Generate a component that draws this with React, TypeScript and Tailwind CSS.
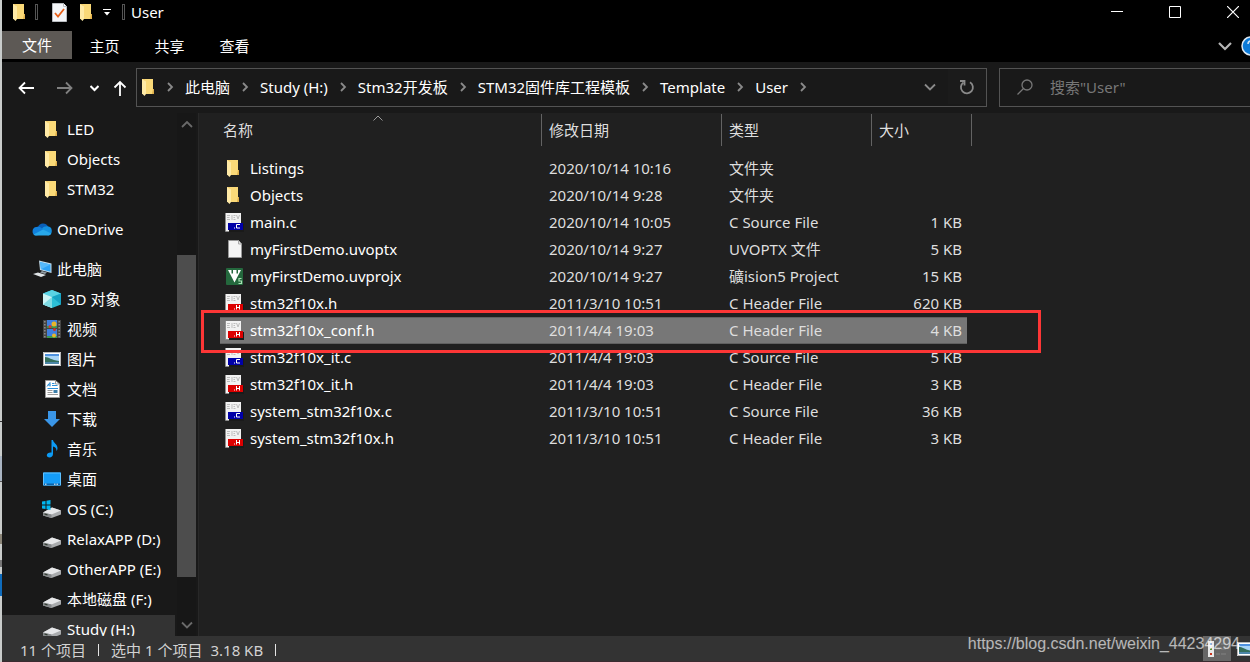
import { Fragment, type ReactNode } from 'react'
import { clsx } from 'clsx'

type FileKind = 'folder' | 'c' | 'h' | 'blank' | 'uvision'

interface FileEntry {
  name: string
  date: string
  type: string
  size: string
  kind: FileKind
  selected?: boolean
}

const FILES: FileEntry[] = [
  { name: 'Listings', date: '2020/10/14 10:16', type: '文件夹', size: '', kind: 'folder' },
  { name: 'Objects', date: '2020/10/14 9:28', type: '文件夹', size: '', kind: 'folder' },
  { name: 'main.c', date: '2020/10/14 10:05', type: 'C Source File', size: '1 KB', kind: 'c' },
  { name: 'myFirstDemo.uvoptx', date: '2020/10/14 9:27', type: 'UVOPTX 文件', size: '5 KB', kind: 'blank' },
  { name: 'myFirstDemo.uvprojx', date: '2020/10/14 9:27', type: '礦ision5 Project', size: '15 KB', kind: 'uvision' },
  { name: 'stm32f10x.h', date: '2011/3/10 10:51', type: 'C Header File', size: '620 KB', kind: 'h' },
  { name: 'stm32f10x_conf.h', date: '2011/4/4 19:03', type: 'C Header File', size: '4 KB', kind: 'h', selected: true },
  { name: 'stm32f10x_it.c', date: '2011/4/4 19:03', type: 'C Source File', size: '5 KB', kind: 'c' },
  { name: 'stm32f10x_it.h', date: '2011/4/4 19:03', type: 'C Header File', size: '3 KB', kind: 'h' },
  { name: 'system_stm32f10x.c', date: '2011/3/10 10:51', type: 'C Source File', size: '36 KB', kind: 'c' },
  { name: 'system_stm32f10x.h', date: '2011/3/10 10:51', type: 'C Header File', size: '3 KB', kind: 'h' },
]

const CRUMBS = ['此电脑', 'Study (H:)', 'Stm32开发板', 'STM32固件库工程模板', 'Template', 'User']

function FolderIcon() {
  return (
    <svg width="14" height="18" viewBox="0 0 14 18" className="shrink-0" aria-hidden="true">
      <path d="M1 1h11v10h1v5H4L1 15z" fill="#f5cf6b" />
      <path d="M4 1h8v10h1v5H4z" fill="#fad978" />
      <path d="M12 11h1v5h-2z" fill="#e0b04c" />
      <path d="M1 1l4 2.500V16l-1.500 2L1 15.500z" fill="#ffeaa6" />
    </svg>
  )
}

function CheckDocIcon() {
  return (
    <svg width="15" height="19" viewBox="0 0 15 19" aria-hidden="true">
      <path d="M.5.5h11l3 3v15H.5z" fill="#f4f6f9" stroke="#b9bcc0" />
      <path d="M11.500.5v3h3" fill="#fff" stroke="#b9bcc0" />
      <path d="M3 10l3 3.500 6-7.500" fill="none" stroke="#e8611a" strokeWidth="1.800" />
    </svg>
  )
}

function SourceIcon({ letter }: { letter: 'C' | 'H' }) {
  const fill = letter === 'C' ? '#0000a8' : '#dc0000'
  return (
    <svg width="20" height="20" viewBox="0 0 20 20" className="shrink-0" aria-hidden="true">
      <path d="M0 1h16v18H0z" fill="#f2f2f2" />
      <path d="M.5 1v18.500H16" fill="none" stroke="#8e8e8e" />
      <path d="M2 3.500h3M2 5.500h2.500M2 7.500h3M7 3v5M8.500 3.500h2M8.500 5.500h1.500M8.500 7.500h2M11.500 3l1.500 4 1.500-4" fill="none" stroke="#bdbdbd" />
      <path d="M4 12h15v8H4z" fill="#1a1a1a" />
      <path d="M3 11h15v7H3z" fill={fill} />
      <path d="M9 16h1" stroke="#fff" />
      {letter === 'C' ? (
        <path d="M15 12.500h-3.500v3.500H15" fill="none" stroke="#fff" />
      ) : (
        <path d="M11.500 12v4.500M14.500 12v4.500M11.500 14.500h3" fill="none" stroke="#fff" />
      )}
    </svg>
  )
}

function BlankDocIcon() {
  return (
    <svg width="20" height="20" viewBox="0 0 20 20" className="shrink-0" aria-hidden="true">
      <path d="M3.500 1.500h10l3 3.500v13.500h-13z" fill="#f5f5f5" stroke="#999" />
      <path d="M13.500 1.500V5h3" fill="#e3e3e3" stroke="#aaa" />
    </svg>
  )
}

function UvisionIcon() {
  return (
    <svg width="20" height="20" viewBox="0 0 20 20" className="shrink-0" aria-hidden="true">
      <rect x="1" y="2" width="17" height="17" rx="1" fill="#24683d" />
      <path d="M3 4h3.500v3.500h1.500V4h3.500v3.500H13V4h3L9.500 16.500z" fill="#fff" />
      <path d="M16.500 12.500H14V15h2.500v2.500h-3" fill="none" stroke="#a9e0b4" strokeWidth="1.200" />
    </svg>
  )
}

function FileIcon({ kind }: { kind: FileKind }) {
  if (kind === 'folder') return <span className="flex w-5 justify-center pr-1"><FolderIcon /></span>
  if (kind === 'c') return <SourceIcon letter="C" />
  if (kind === 'h') return <SourceIcon letter="H" />
  if (kind === 'uvision') return <UvisionIcon />
  return <BlankDocIcon />
}

function Svg20({ children }: { children: ReactNode }) {
  return (
    <svg width="20" height="20" viewBox="0 0 20 20" className="shrink-0" aria-hidden="true">
      {children}
    </svg>
  )
}

function DriveIcon({ system }: { system?: boolean }) {
  return (
    <Svg20>
      <path d="M1 13.500L10 8.500l9 3v4L9.500 19 1 16.500z" fill="#a9abad" />
      <path d="M1 13.500L10 8.500l9 3-9.500 4z" fill="#e6e7e9" />
      <path d="M1 13.500l8.500 2V19L1 16.500z" fill="#85888a" />
      <path d="M2.500 15l3 .8" stroke="#2f3a2f" strokeWidth="1.200" />
      {system && (
        <path d="M0 2.500l3.500-.5v3.500H0zM4.500 1.800L8.500 1v4.500h-4zM0 6.500h3.500V10L0 9.500zM4.500 6.500h4V11l-4-.8z" fill="#00b7f0" />
      )}
    </Svg20>
  )
}

const oneDriveIcon = (
  <Svg20>
    <path d="M6 8a5.500 5.500 0 0 1 10-.5L10 13z" fill="#0a5fb8" />
    <path d="M4 16.500A4.300 4.300 0 0 1 4.500 8c2-.8 4-.2 5.500 1.500l6 5z" fill="#1180dc" />
    <path d="M15.500 7.200A4.700 4.700 0 0 1 16 16.500l-6-7c1.200-1.800 3.300-2.500 5.500-2.300z" fill="#1490df" />
    <path d="M1.500 15.500L11 10.500l8.300 4c-.5 1.200-1.800 2-3.300 2H4c-1 0-2-.4-2.500-1z" fill="#28a8ea" />
  </Svg20>
)

const computerIcon = (
  <Svg20>
    <path d="M7 1.500l12.500 3v9.500L8 11z" fill="#c4dceb" />
    <path d="M8 3l10.500 2.500v7.300L9 10.300z" fill="#2ea3f7" />
    <path d="M8 3l10.500 2.500L9 10.300z" fill="#55b9fb" />
    <path d="M10 12l5 1.500-2 1.500-5-1.500z" fill="#8f9aa2" />
    <path d="M1 15l5-1.500 8 2.500-5 2z" fill="#dfe3e6" />
  </Svg20>
)

const objectsIcon = (
  <Svg20>
    <path d="M10 1l9 3.500v11L10 19l-9-3.500v-11z" fill="#2cbfd6" />
    <path d="M10 1l9 3.500L10 8 1 4.500z" fill="#59d3e4" />
    <path d="M1 4.500L10 8v11l-9-3.500z" fill="#cdf4f5" />
    <path d="M1 15.500L10 8v11z" fill="#7fdbe4" />
    <path d="M10 8l9-3.500v11z" fill="#16a3c4" />
  </Svg20>
)

const videoIcon = (
  <Svg20>
    <path d="M1 1h18v18H1z" fill="#454545" />
    <path d="M5 1h10v8H5zM5 10h10v9H5z" fill="#3f7fe0" />
    <path d="M2.800 2v17M17.200 2v17" stroke="#8a8a8a" strokeWidth="1.600" strokeDasharray="1.500 1.500" />
    <path d="M5 7h10v2H5zM5 17h10v2H5z" fill="#3b9650" />
    <circle cx="12" cy="5" r="2.500" fill="#e8b62a" />
    <circle cx="8" cy="7.500" r="1.500" fill="#d83a2e" />
    <circle cx="12.500" cy="10.500" r="1.500" fill="#c2322a" />
    <circle cx="12" cy="16.500" r="2" fill="#e8b62a" />
  </Svg20>
)

function PictureIcon() {
  return (
    <Svg20>
      <path d="M1 3h18v14H1z" fill="#fff" />
      <path d="M1.500 3.500h17v13h-17z" fill="none" stroke="#b8b8b8" />
      <path d="M3 5h14v10H3z" fill="#a9d5f7" />
      <path d="M3 5h14v2H3z" fill="#4f92e0" />
      <path d="M3 8c4 0 6 3 14 4v3H3z" fill="#356f5c" />
      <path d="M3 13h14v2H3z" fill="#4c86a8" />
    </Svg20>
  )
}

const documentIcon = (
  <Svg20>
    <path d="M3.500 1.500h10l4 3.500v13.500h-14z" fill="#fff" stroke="#9a9a9a" />
    <path d="M13.500 1.500V5h4" fill="none" stroke="#9a9a9a" />
    <path d="M5 7.500l3-4v4M5.500 6h3" fill="none" stroke="#2b8fd8" />
    <path d="M10 4.500h2.500M10 6.500h5.500M5.500 9.500H16" stroke="#2b8fd8" />
    <path d="M5.500 11.500h5M5.500 13.500h5M5.500 15.500h10.500" stroke="#999" />
    <path d="M11.500 11h4v3h-4z" fill="#3c7faa" />
  </Svg20>
)

const downloadIcon = (
  <Svg20>
    <path d="M6 2h8v8h4l-8 8-8-8h4z" fill="#3a96e8" />
  </Svg20>
)

const musicIcon = (
  <Svg20>
    <path d="M9.500 1h1.500c.3 3 4.500 4 4.500 8 0 1.500-.5 2.500-1 3 0-3-1.500-4-3.500-4.500V15c0 2.200-1.600 3.500-3.500 3.500-1.600 0-2.700-.9-2.700-2.200 0-1.900 2.200-3.300 4.700-2.800z" fill="#0c9bf5" />
  </Svg20>
)

const desktopIcon = (
  <Svg20>
    <path d="M1 3.500h18v13H1z" fill="#149cf8" />
    <path d="M1.500 4h17v12h-17z" fill="none" stroke="#5fc0ff" />
    <path d="M2 14.500h16V16H2z" fill="#0a64ad" />
    <path d="M3 15.200h1.500M12 15.200h5" stroke="#fff" strokeDasharray="1.500 1" />
  </Svg20>
)

const folderIcon20 = <span className="flex w-5 justify-center pr-[2px]"><FolderIcon /></span>

interface TreeItem {
  label: string
  icon: ReactNode
  root?: boolean
  selected?: boolean
}

const TREE: TreeItem[][] = [
  [
    { label: 'LED', icon: folderIcon20 },
    { label: 'Objects', icon: folderIcon20 },
    { label: 'STM32', icon: folderIcon20 },
  ],
  [{ label: 'OneDrive', icon: oneDriveIcon, root: true }],
  [
    { label: '此电脑', icon: computerIcon, root: true },
    { label: '3D 对象', icon: objectsIcon },
    { label: '视频', icon: videoIcon },
    { label: '图片', icon: <PictureIcon /> },
    { label: '文档', icon: documentIcon },
    { label: '下载', icon: downloadIcon },
    { label: '音乐', icon: musicIcon },
    { label: '桌面', icon: desktopIcon },
    { label: 'OS (C:)', icon: <DriveIcon system /> },
    { label: 'RelaxAPP (D:)', icon: <DriveIcon /> },
    { label: 'OtherAPP (E:)', icon: <DriveIcon /> },
    { label: '本地磁盘 (F:)', icon: <DriveIcon /> },
    { label: 'Study (H:)', icon: <DriveIcon />, selected: true },
  ],
]

function Chevron({ dir, className }: { dir: 'up' | 'down' | 'right'; className?: string }) {
  const d = { up: 'M1 8l5-5 5 5', down: 'M1 3.500l5 5 5-5', right: 'M4 2l4 4-4 4' }[dir]
  return (
    <svg width="12" height="12" viewBox="0 0 12 12" className={className} fill="none" stroke="currentColor" strokeWidth="1.800" aria-hidden="true">
      <path d={d} />
    </svg>
  )
}

function Arrow({ dir }: { dir: 'left' | 'right' | 'up' }) {
  const d = {
    left: 'M16 8H1.500M7 2.500L1.500 8 7 13.500',
    right: 'M0 8h14.500M9 2.500L14.500 8 9 13.500',
    up: 'M8 16V2M2.500 7.500L8 2l5.500 5.500',
  }[dir]
  return (
    <svg width="16" height="16" viewBox="0 0 16 16" fill="none" stroke="currentColor" strokeWidth="1.800" aria-hidden="true">
      <path d={d} />
    </svg>
  )
}

function TitleBar() {
  return (
    <header className="flex h-[31px] items-start justify-between">
      <div className="flex h-6 items-center">
        <span className="flex w-[33px] justify-center"><FolderIcon /></span>
        <span className="h-4 w-[3px] border border-[#555]" />
        <button aria-label="属性" className="flex w-[42px] justify-center"><CheckDocIcon /></button>
        <button aria-label="新建文件夹" className="flex w-3 justify-center"><FolderIcon /></button>
        <button aria-label="自定义快速访问工具栏" className="flex w-[30px] justify-center">
          <svg width="8" height="8" viewBox="0 0 8 8" aria-hidden="true">
            <path d="M0 1.500h8" stroke="#fff" />
            <path d="M1 4h6L4 7.500z" fill="#fff" />
          </svg>
        </button>
        <span className="h-4 w-[3px] border border-[#555]" />
        <h1 className="pl-[6px] text-[15px]">User</h1>
      </div>
      <div className="flex h-6 items-stretch">
        <button aria-label="最小化" className="flex w-[58px] items-center justify-center">
          <svg width="12" height="12" viewBox="0 0 12 12"><path d="M0 5.500h12" stroke="#fff" /></svg>
        </button>
        <button aria-label="最大化" className="flex w-[58px] items-center justify-center">
          <svg width="12" height="12" viewBox="0 0 12 12"><path d="M.5.5h11v11H.5z" fill="none" stroke="#fff" /></svg>
        </button>
        <button aria-label="关闭" className="flex w-[46px] items-center justify-center pl-3">
          <svg width="12" height="12" viewBox="0 0 12 12"><path d="M0 0l12 12M12 0L0 12" stroke="#fff" strokeWidth="1.200" /></svg>
        </button>
      </div>
    </header>
  )
}

function Ribbon() {
  return (
    <div className="flex h-[31px] items-start justify-between">
      <div className="flex" role="tablist">
        <button role="tab" className="h-7 w-[70px] bg-[#5d5955]">文件</button>
        {['主页', '共享', '查看'].map((tab) => (
          <button key={tab} role="tab" className="h-[30px] w-[65px]">{tab}</button>
        ))}
      </div>
      <div className="flex h-[30px] items-center">
        <button aria-label="展开功能区" className="text-[#b5b5b5]">
          <svg width="16" height="10" viewBox="0 0 16 10" fill="none" stroke="currentColor" strokeWidth="2.200"><path d="M2 2l6 6 6-6" /></svg>
        </button>
        <button aria-label="帮助" className="ml-2">
          <svg width="9" height="20" viewBox="0 0 9 20">
            <circle cx="10" cy="10" r="9" fill="#0b7ad8" stroke="#dce8f2" strokeWidth="1.500" />
            <path d="M7 8c0-2 1-3 3-3" fill="none" stroke="#cfe5f7" strokeWidth="1.500" />
          </svg>
        </button>
      </div>
    </div>
  )
}

function NavBar() {
  return (
    <div className="flex h-[51px] items-start gap-3 bg-[#191919] pt-[6px]">
      <div className="flex min-w-0 flex-1">
        <div className="flex h-[39px] items-center">
          <button aria-label="后退" className="flex w-[47px] justify-center"><Arrow dir="left" /></button>
          <button aria-label="前进" className="flex w-[31px] justify-center text-[#808080]"><Arrow dir="right" /></button>
          <button aria-label="最近浏览的位置" className="flex w-7 justify-center">
            <svg width="9" height="8" viewBox="0 0 9 8" fill="none" stroke="currentColor" strokeWidth="2"><path d="M.5 2l4 4 4-4" /></svg>
          </button>
          <button aria-label="上移" className="flex w-7 justify-center pr-1"><Arrow dir="up" /></button>
        </div>
        <div className="flex h-[39px] min-w-0 flex-1 items-center border border-[#535353] pb-[2px]">
          <span className="pl-1"><FolderIcon /></span>
          <nav aria-label="地址" className="flex flex-1 items-center">
            <Chevron dir="right" className="mx-[9px] text-[#8a8a8a]" />
            {CRUMBS.map((crumb) => (
              <Fragment key={crumb}>
                <a href="#" className="whitespace-nowrap">{crumb}</a>
                <Chevron dir="right" className="mx-[9px] text-[#8a8a8a]" />
              </Fragment>
            ))}
          </nav>
          <button aria-label="上一个位置" className="flex w-9 justify-center text-[#8a8a8a]"><Chevron dir="down" /></button>
          <button aria-label="刷新" className="flex h-full w-[38px] items-center justify-center bg-[#1b1b1b] text-[#8a8a8a]">
            <svg width="16" height="16" viewBox="0 0 16 16" fill="none" stroke="currentColor" strokeWidth="1.800">
              <path d="M11 3.200a6 6 0 1 1-6.500.2" />
              <path d="M1 2h4.500v4.500" />
            </svg>
          </button>
        </div>
      </div>
      <label className="flex h-[39px] w-[251px] items-center gap-4 border border-r-0 border-[#535353] pb-[2px] pl-4 text-[#777]">
        <svg width="18" height="18" viewBox="0 0 18 18" fill="none" stroke="currentColor" strokeWidth="1.300" aria-hidden="true">
          <circle cx="11" cy="7" r="5" />
          <path d="M7.500 10.500L1.500 16.500" />
        </svg>
        <input aria-label="搜索" placeholder={'搜索"User"'} className="min-w-0 flex-1 bg-transparent outline-none placeholder:text-[#777]" />
      </label>
    </div>
  )
}

function Sidebar() {
  return (
    <aside className="flex w-[197px] shrink-0 bg-[#191919]">
      <nav aria-label="导航窗格" className="flex h-full flex-1 flex-col gap-[10px] overflow-hidden pt-[2px]">
        {TREE.map((group, i) => (
          <ul key={i}>
            {group.map((item) => (
              <li key={item.label}>
                <a
                  href="#"
                  className={clsx(
                    'flex h-[30px] items-center gap-[5px] pb-[2px] whitespace-nowrap',
                    item.root ? 'pl-[30px]' : 'pl-10',
                    item.selected && 'bg-[#333]'
                  )}
                >
                  {item.icon}
                  {item.label}
                </a>
              </li>
            ))}
          </ul>
        ))}
      </nav>
      <div className="mx-[2px] flex w-[19px] flex-col bg-[#171717] text-[#6a6a6a]">
        <button aria-label="向上滚动" className="flex h-6 items-center justify-center"><Chevron dir="up" /></button>
        <div className="min-h-0 flex-1 pt-[118px] pb-[37px]">
          <div className="h-full bg-[#4d4d4d]" />
        </div>
        <button aria-label="向下滚动" className="flex h-[22px] items-center justify-center"><Chevron dir="down" /></button>
      </div>
      <div className="w-px bg-[#282828]" />
    </aside>
  )
}

function FileTable() {
  const head = 'border-r border-[#636363] pl-[7px] text-left font-normal'
  return (
    <table className="w-[752px] table-fixed border-separate border-spacing-0">
      <colgroup>
        <col className="w-[322px]" />
        <col className="w-[180px]" />
        <col className="w-[150px]" />
        <col className="w-[95px]" />
        <col className="w-[5px]" />
      </colgroup>
      <thead>
        <tr className="h-8 text-[#dedede]">
          <th className="relative border-r border-[#636363] pl-[3px] text-left font-normal">
            名称
            <svg width="10" height="6" viewBox="0 0 10 6" className="absolute top-[1px] left-[153px]" fill="none" stroke="#9a9a9a">
              <path d="M.5 5.500L5 1l4.500 4.500" />
            </svg>
          </th>
          <th className={head}>修改日期</th>
          <th className={head}>类型</th>
          <th className={head} colSpan={2}>大小</th>
        </tr>
      </thead>
      <tbody className="before:block before:h-[9px]">
        {FILES.map((file) => {
          const cell = clsx(
            'h-[27px] pt-0 pb-[2px]',
            file.selected && 'border-y border-[#606060] bg-[#777] pb-px'
          )
          return (
            <tr key={file.name} className="whitespace-nowrap">
              <td className={clsx(cell, 'pr-0 pl-[5px]')}>
                <div className="flex items-center gap-[5px]">
                  <FileIcon kind={file.kind} />
                  {file.name}
                </div>
              </td>
              <td className={clsx(cell, 'pr-0 pl-[7px] text-[#dedede]')}>{file.date}</td>
              <td className={clsx(cell, 'pr-0 pl-[7px] text-[#dedede]')}>{file.type}</td>
              <td className={clsx(cell, 'pr-[5px] pl-0 text-right text-[#dedede]')}>{file.size}</td>
              <td className="p-0" />
            </tr>
          )
        })}
      </tbody>
    </table>
  )
}

function StatusBar() {
  return (
    <footer className="flex h-[26px] items-center justify-between border-b border-[#3a2b30] bg-[#333] text-[#d2d2d2]">
      <div className="flex items-center pt-[2px] pl-[18px]">
        <span>11 个项目</span>
        <span className="mx-3 h-3 w-px bg-[#e5e5e5]" />
        <span>选中 1 个项目</span>
        <span className="pl-2">3.18 KB</span>
        <span className="mx-3 h-3 w-px bg-[#e5e5e5]" />
      </div>
      <div className="flex h-full items-center gap-[5px] overflow-hidden">
        <button aria-label="详细信息" className="flex h-full w-7 items-center justify-center bg-[#666]">
          <svg width="18" height="18" viewBox="0 0 18 18">
            <path d="M0 1h6v16H0z" fill="#e8e8e8" />
            <path d="M2 3h2v2H2z" fill="#3a78c8" />
            <path d="M2 8h2v2H2z" fill="#5a8a3a" />
            <path d="M2 13h2v2H2z" fill="#c8321e" />
            <path d="M8 4h4M13 4h5M8 9h4M13 9h5M8 14h4M13 14h5" stroke="#828282" />
          </svg>
        </button>
        <button aria-label="大缩略图" className="w-[14px] overflow-hidden"><PictureIcon /></button>
      </div>
    </footer>
  )
}

// sliver of the window that sits behind the explorer
function BackdropEdge() {
  return (
    <div className="flex w-[2px] shrink-0 flex-col bg-[#c9cccb]">
      <div className="h-[421px]" />
      <div className="h-px bg-[#333]" />
      <div className="h-[34px]" />
      <div className="h-[25px] bg-[#a9b4c2]" />
      <div className="h-px bg-[#555]" />
      <div className="h-[52px]" />
      <div className="h-[10px] bg-[#8b8578]" />
      <div className="h-[16px]" />
      <div className="h-[7px] bg-[#777]" />
      <div className="h-[7px]" />
      <div className="h-[22px] bg-[#0f6cbd]" />
    </div>
  )
}

export default function App() {
  return (
    <div className="relative flex h-screen overflow-hidden bg-black font-['Noto_Sans','Noto_Sans_CJK_SC',sans-serif] text-[15px] leading-5 text-white">
      <BackdropEdge />
      <div className="flex min-w-0 flex-1 flex-col">
        <TitleBar />
        <Ribbon />
        <NavBar />
        <div className="flex min-h-0 flex-1">
          <Sidebar />
          <main className="min-w-0 flex-1 overflow-hidden bg-[#202020] pt-px pl-[21px]">
            <FileTable />
          </main>
        </div>
        <StatusBar />
      </div>
      <div className="pointer-events-none absolute top-[310px] left-[201px] h-[43px] w-[840px] border-3 border-[#fd3636]" />
      <span className="absolute right-[10px] bottom-2 font-['Liberation_Sans',sans-serif] text-[16px] text-white/65">
        https://blog.csdn.net/weixin_44234294
      </span>
    </div>
  )
}
